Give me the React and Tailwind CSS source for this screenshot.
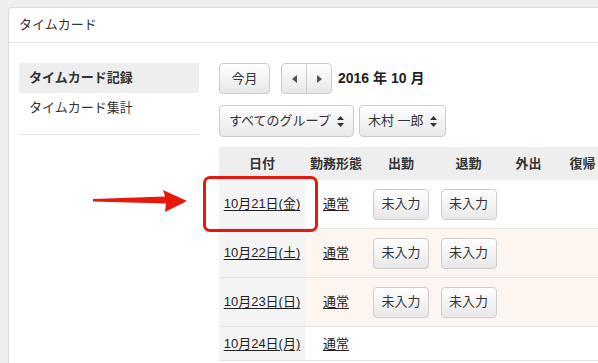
import React from 'react';

const font = { fontFamily: '"Liberation Sans", "Noto Sans CJK JP", sans-serif' };

const rows = [
  { date: '10月21日(金)', tint: false, buttons: true },
  { date: '10月22日(土)', tint: true, buttons: true },
  { date: '10月23日(日)', tint: true, buttons: true },
  { date: '10月24日(月)', tint: false, buttons: false }
];

function Btn({ children, className = '' }) {
  return (
    <div
      className={
        'flex items-center justify-center rounded-[4px] border border-[#cccccc] bg-gradient-to-b from-white to-[#e8e8e8] text-[13px] text-[#333] shadow-[inset_0_1px_0_rgba(255,255,255,0.6)] ' +
        className
      }>
      {children}
    </div>
  );
}

function UpDown() {
  return (
    <svg width="7" height="11" viewBox="0 0 7 11" className="ml-auto">
      <path d="M3.5 0 L7 4 L0 4 Z" fill="#333" />
      <path d="M0 7 L7 7 L3.5 11 Z" fill="#333" />
    </svg>
  );
}

function App() {
  return (
    <div
      className="relative w-[598px] h-[363px] overflow-hidden bg-[#eeeeee] pt-[7px] pl-[8px] text-[#333]"
      style={font}>
      <div className="w-[640px] h-[400px] bg-white border border-[#dddddd] rounded-tl-[4px]">
        {/* header */}
        <div className="h-[35px] border-b border-[#e3e3e3] pl-[10px] flex items-center text-[13px]">
          タイムカード
        </div>

        <div className="flex pt-[20px] pl-[10px]">
          {/* sidebar */}
          <div className="w-[180px] shrink-0">
            <div className="h-[30px] bg-[#eeeeee] pl-[10px] flex items-center text-[13px] font-bold">
              タイムカード記録
            </div>
            <div className="h-[30px] pl-[10px] flex items-center text-[13px]">タイムカード集計</div>
            <div className="mt-[11px] border-t border-[#e3e3e3]" />
          </div>

          {/* content */}
          <div className="ml-[20px] flex-1">
            <div className="flex items-center h-[31px]">
              <Btn className="w-[51px] h-[31px]">今月</Btn>
              <div className="ml-[11px] flex h-[31px] w-[51px] rounded-[4px] border border-[#cccccc] bg-gradient-to-b from-white to-[#e8e8e8]">
                <div className="flex-1 flex items-center justify-center border-r border-[#cccccc]">
                  <svg width="5" height="8" viewBox="0 0 5 8">
                    <path d="M5 0 L0 4 L5 8 Z" fill="#555" />
                  </svg>
                </div>
                <div className="flex-1 flex items-center justify-center">
                  <svg width="5" height="8" viewBox="0 0 5 8">
                    <path d="M0 0 L5 4 L0 8 Z" fill="#555" />
                  </svg>
                </div>
              </div>
              <div className="ml-[6px] text-[14px] font-bold text-[#222]">2016 年 10 月</div>
            </div>

            <div className="mt-[11px] flex items-center gap-[5px]">
              <Btn className="w-[135px] h-[32px] !justify-start px-[9px]">
                <span>すべてのグループ</span>
                <UpDown />
              </Btn>
              <Btn className="w-[87px] h-[32px] !justify-start px-[8px]">
                <span>木村 一郎</span>
                <UpDown />
              </Btn>
            </div>

            {/* table */}
            <div className="mt-[10px] text-[13px]">
              <div className="flex h-[33px] bg-[#eeeeee] font-bold items-center">
                <div className="w-[86px] text-center">日付</div>
                <div className="w-[62px] text-center">勤務形態</div>
                <div className="w-[68px] text-center">出勤</div>
                <div className="w-[67px] text-center">退勤</div>
                <div className="w-[53px] text-center">外出</div>
                <div className="w-[55px] text-center">復帰</div>
              </div>
              {rows.map((row, i) => (
                <div
                  key={i}
                  className={
                    'flex border-b border-[#e6e6e6] ' +
                    (row.buttons ? 'h-[49px] ' : 'h-[34px] ') +
                    (row.tint ? 'bg-[#fcf5f0]' : 'bg-white')
                  }>
                  <div className="w-[86px] bg-[#f4f4f4] flex items-center justify-center">
                    <span className="underline underline-offset-2 text-[#222]">{row.date}</span>
                  </div>
                  <div className="w-[62px] flex items-center justify-center">
                    <span className="underline underline-offset-2 text-[#222]">通常</span>
                  </div>
                  {row.buttons && (
                    <>
                      <div className="w-[68px] flex items-center justify-center">
                        <Btn className="w-[56px] h-[31px]">未入力</Btn>
                      </div>
                      <div className="w-[67px] flex items-center justify-center">
                        <Btn className="w-[56px] h-[31px]">未入力</Btn>
                      </div>
                    </>
                  )}
                </div>
              ))}
            </div>
          </div>
        </div>
      </div>

      {/* annotation overlays */}
      <div className="absolute left-[203px] top-[176px] w-[115px] h-[56px] border-[3px] border-[#e3190d] rounded-[7px]" />
      <svg className="absolute left-[90px] top-[188px]" width="100" height="26" viewBox="0 0 100 26">
        <path d="M3 11 L75 8.5 L73 2 L97 13 L75 24 L76 15.5 L3 13.5 Z" fill="#e5190c" />
      </svg>
    </div>
  );
}

export default App;
